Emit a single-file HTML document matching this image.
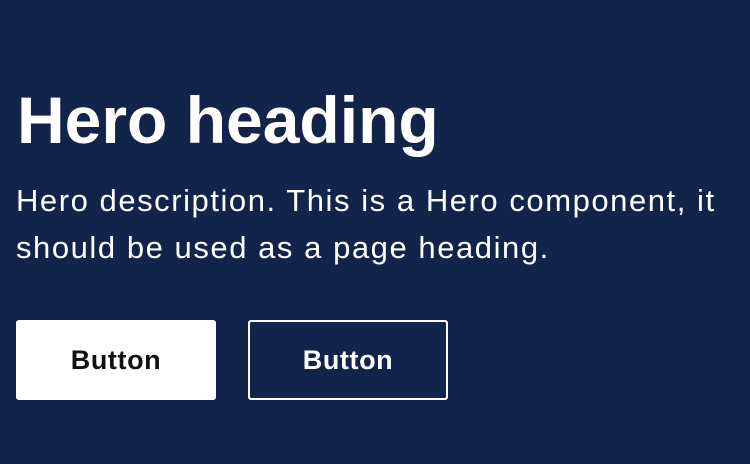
<!DOCTYPE html>
<html><head><style>
html,body{margin:0;padding:0;width:750px;height:464px;background:#12244a;overflow:hidden;font-family:"Liberation Sans",sans-serif;color:#fff}
h1{position:absolute;left:17px;top:76px;margin:0;font-size:66px;font-weight:bold;line-height:88px;white-space:nowrap}
p{position:absolute;left:16px;top:177px;margin:0;font-size:31px;line-height:47px;white-space:nowrap;letter-spacing:1.55px}
.b{position:absolute;top:320px;width:200px;height:80px;box-sizing:border-box;border-radius:3px;font-size:27px;font-weight:bold;display:flex;align-items:center;justify-content:center;letter-spacing:0.6px}
.w{left:16px;background:#fff;color:#111}
.o{left:248px;border:2px solid #fff;color:#fff}
</style></head><body>
<h1>Hero heading</h1>
<p>Hero description. This is a Hero component, it<br>should be used as a page heading.</p>
<div class="b w">Button</div>
<div class="b o">Button</div>
</body></html>
